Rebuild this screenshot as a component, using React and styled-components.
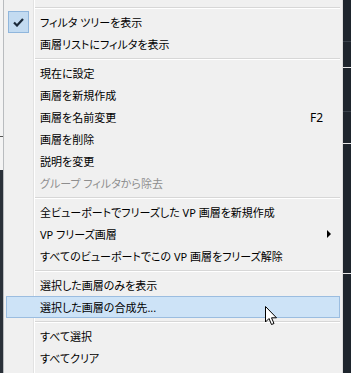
import React from 'react';
import styled, { createGlobalStyle } from 'styled-components';

const GlobalStyle = createGlobalStyle`
  html, body {
    margin: 0;
    padding: 0;
    background: #1f262e;
  }
`;

const Screen = styled.div`
  position: relative;
  display: flex;
  width: 351px;
  height: 373px;
  overflow: hidden;
  font-family: "Noto Sans", "Noto Sans CJK JP", sans-serif;
  font-size: 11px;
  font-feature-settings: "palt";
`;

const LeftStrip = styled.div`
  width: 3px;
  flex: none;
  display: flex;
  flex-direction: column;
  border-right: 1px solid #b9bcbf;
`;

const LightPart = styled.div`
  height: ${(p) => p.h}px;
  background: #f4f4f4;
  border-bottom: ${(p) => (p.line ? '1px solid #555' : 'none')};
`;

const DarkPart = styled.div`
  flex: 1;
  background: #2a3139;
`;

const Menu = styled.div`
  position: relative;
  width: 338px;
  flex: none;
  background: #f0f0f0;
  display: flex;
  flex-direction: column;
  border-right: 1px solid #dcdcdc;
`;

const Gutter = styled.div`
  position: absolute;
  left: 29px;
  top: 0;
  bottom: 0;
  width: 1px;
  background: #e2e2e2;
  border-right: 1px solid #fff;
`;

const TopCut = styled.div`
  height: 4px;
`;

const Separator = styled.div`
  height: 7px;
  display: flex;
  align-items: center;
  padding-left: 30px;
  &::after {
    content: '';
    flex: 1;
    height: 1px;
    margin-right: 2px;
    background: #d7d7d7;
    border-bottom: 1px solid #fff;
  }
`;

const Item = styled.div`
  position: relative;
  height: 22px;
  margin: 0 2px;
  display: flex;
  align-items: center;
  box-sizing: border-box;
  border: 1px solid ${(p) => (p.active ? '#9bbde0' : 'transparent')};
  background: ${(p) => (p.active ? '#cde3f7' : 'transparent')};
  color: ${(p) => (p.disabled ? '#8e8e8e' : '#000')};
`;

const CheckBox = styled.div`
  width: 21px;
  height: 22px;
  margin-left: 1px;
  box-sizing: border-box;
  border: 1px solid #90b6dc;
  background: #c3dbf1;
  display: flex;
  align-items: center;
  justify-content: center;
`;

const Label = styled.span`
  position: absolute;
  left: 33px;
  white-space: nowrap;
  line-height: 1;
`;

const Shortcut = styled.span`
  position: absolute;
  right: 16px;
  font-family: "Noto Sans", sans-serif;
  font-size: 12px;
`;

const SubArrow = styled.span`
  position: absolute;
  right: 8px;
  width: 0;
  height: 0;
  border-top: 4px solid transparent;
  border-bottom: 4px solid transparent;
  border-left: 4px solid #000;
`;

const RightStrip = styled.div`
  flex: 1;
  background: #1e252d;
  display: flex;
  flex-direction: column;
`;

const Rule = styled.div`
  height: 1px;
  margin-top: ${(p) => p.gap}px;
  background: ${(p) => (p.bright ? '#e8e8e8' : '#39414a')};
`;

const Cursor = styled.svg`
  position: absolute;
  left: 265px;
  top: 306px;
`;

const Check = () => (
  <svg width="11" height="9" viewBox="0 0 11 9">
    <path d="M1 4.5 L4 7.5 L10 1" fill="none" stroke="#1b2a3a" strokeWidth="2.2" />
  </svg>
);

const entries = [
  { type: 'sep' },
  { label: 'フィルタ ツリーを表示', checked: true },
  { label: '画層リストにフィルタを表示' },
  { type: 'sep' },
  { label: '現在に設定' },
  { label: '画層を新規作成' },
  { label: '画層を名前変更', shortcut: 'F2' },
  { label: '画層を削除' },
  { label: '説明を変更' },
  { label: 'グループ フィルタから除去', disabled: true },
  { type: 'sep' },
  { label: '全ビューポートでフリーズした VP 画層を新規作成' },
  { label: 'VP フリーズ画層', sub: true },
  { label: 'すべてのビューポートでこの VP 画層をフリーズ解除' },
  { type: 'sep' },
  { label: '選択した画層のみを表示' },
  { label: '選択した画層の合成先...', active: true },
  { type: 'sep' },
  { label: 'すべて選択' },
  { label: 'すべてクリア' },
];

const App = () => (
  <>
    <GlobalStyle />
    <Screen>
      <LeftStrip>
        <LightPart h={136} line />
        <LightPart h={33} />
        <DarkPart />
      </LeftStrip>
      <Menu>
        <Gutter />
        <TopCut />
        {entries.map((e, i) =>
          e.type === 'sep' ? (
            <Separator key={i} />
          ) : (
            <Item key={i} active={e.active} disabled={e.disabled}>
              {e.checked && (
                <CheckBox>
                  <Check />
                </CheckBox>
              )}
              <Label>{e.label}</Label>
              {e.shortcut && <Shortcut>{e.shortcut}</Shortcut>}
              {e.sub && <SubArrow />}
            </Item>
          )
        )}
      </Menu>
      <RightStrip>
        <Rule gap={41} />
        <Rule gap={25} bright />
        <Rule gap={43} />
        <Rule gap={31} bright />
        <Rule gap={129} bright />
      </RightStrip>
      <Cursor width="13" height="20" viewBox="0 0 13 20">
        <path
          d="M0.5 0.5 L0.5 16 L4 12.5 L6.5 18.5 L9 17.5 L6.5 11.8 L11.5 11.8 Z"
          fill="#fff"
          stroke="#000"
          strokeWidth="1"
          strokeLinejoin="round"
        />
      </Cursor>
    </Screen>
  </>
);

export default App;
